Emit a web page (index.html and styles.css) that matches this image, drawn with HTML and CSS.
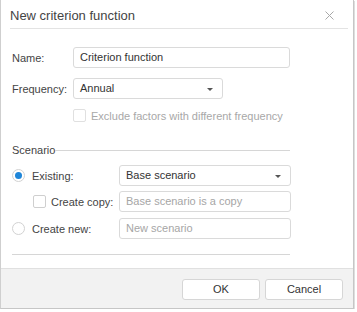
FILE: index.html
```html
<!DOCTYPE html>
<html>
<head>
<meta charset="utf-8">
<link rel="stylesheet" href="styles.css">
</head>
<body>
<div class="dialog">
  <div class="header">
    <span class="title">New criterion function</span>
    <span class="close">
      <svg width="9" height="9" viewBox="0 0 9 9"><path d="M0.5 0.5 L8.5 8.5 M8.5 0.5 L0.5 8.5" stroke="#a8a8a8" stroke-width="1" fill="none"/></svg>
    </span>
  </div>
  <div class="body">
    <div class="row r-name">
      <span class="lbl w61">Name:</span>
      <div class="field wide">Criterion function</div>
    </div>
    <div class="row r-freq">
      <span class="lbl w61">Frequency:</span>
      <div class="field combo narrow">Annual<span class="arrow"></span></div>
    </div>
    <div class="row r-excl">
      <span class="chk disabled"></span>
      <span class="dis">Exclude factors with different frequency</span>
    </div>
    <div class="group">
      <span class="gtitle">Scenario</span>
      <span class="gline"></span>
    </div>
    <div class="row r-exist">
      <span class="radio on"></span>
      <span class="lbl w87">Existing:</span>
      <div class="field combo sc">Base scenario<span class="arrow"></span></div>
    </div>
    <div class="row r-copy">
      <span class="chk"></span>
      <span class="lbl w68">Create copy:</span>
      <div class="field sc ph">Base scenario is a copy</div>
    </div>
    <div class="row r-new">
      <span class="radio"></span>
      <span class="lbl w87">Create new:</span>
      <div class="field sc ph">New scenario</div>
    </div>
    <div class="sep"></div>
  </div>
  <div class="footer">
    <button class="btn">OK</button>
    <button class="btn">Cancel</button>
  </div>
</div>
</body>
</html>
```

FILE: styles.css
```css
html, body {
  margin: 0;
  padding: 0;
  background: #ffffff;
}
body {
  font-family: "Liberation Sans", Arial, sans-serif;
  font-size: 11px;
  color: #333333;
}
.dialog {
  width: 354px;
  height: 309px;
  box-sizing: border-box;
  border: 1px solid #c6c6c6;
  border-top: none;
  border-left: 1px solid #cfcfcf;
  box-shadow: 1px 1px 0 #dedede;
  background: #ffffff;
  display: flex;
  flex-direction: column;
}
.header {
  height: 28px;
  margin: 0 5px 0 9px;
  border-bottom: 1px solid #e3e3e3;
  display: flex;
  align-items: center;
  justify-content: space-between;
}
.title {
  font-size: 13px;
  color: #444444;
  padding-top: 2px;
}
.close {
  display: flex;
  margin-right: 14px;
  margin-top: 2px;
}
.body {
  flex: 1;
  padding: 0 0 0 11px;
}
.row {
  display: flex;
  align-items: center;
}
.lbl {
  color: #444444;
  flex: none;
  white-space: nowrap;
}
.w61 { width: 61px; }
.w87 { width: 87px; }
.w68 { width: 68px; }
.field {
  box-sizing: border-box;
  height: 21px;
  border: 1px solid #dadada;
  border-radius: 3px;
  padding: 0 6px;
  line-height: 19px;
  color: #333333;
  position: relative;
  white-space: nowrap;
}
.wide { width: 217px; }
.narrow { width: 150px; }
.sc { width: 172px; }
.ph { color: #a6a6a6; }
.arrow {
  position: absolute;
  right: 9px;
  top: 9px;
  width: 0;
  height: 0;
  border-left: 3.5px solid transparent;
  border-right: 3.5px solid transparent;
  border-top: 3px solid #555555;
}
.r-name { margin-top: 18px; }
.r-freq { margin-top: 10px; }
.r-excl { margin-top: 10px; padding-left: 61px; }
.chk {
  box-sizing: border-box;
  width: 13px;
  height: 13px;
  border: 1px solid #cfcfcf;
  border-radius: 2px;
  background: #ffffff;
  flex: none;
  margin-right: 5px;
}
.chk.disabled { border-color: #e0e0e0; }
.dis { color: #a8a8a8; }
.group {
  display: flex;
  align-items: center;
  margin-top: 22px;
  width: 278px;
}
.gtitle { color: #444444; }
.gline {
  flex: 1;
  height: 1px;
  background: #d6d6d6;
  margin-top: 1px;
}
.radio {
  box-sizing: border-box;
  width: 13px;
  height: 13px;
  border: 1px solid #d2d2d2;
  border-radius: 50%;
  background: #ffffff;
  flex: none;
  margin-right: 7px;
  position: relative;
}
.radio.on::after {
  content: "";
  position: absolute;
  left: 2px;
  top: 2px;
  width: 7px;
  height: 7px;
  border-radius: 50%;
  background: #1f86d9;
}
.r-exist { margin-top: 9px; }
.r-copy { margin-top: 5px; padding-left: 21px; }
.r-new { margin-top: 6px; }
.sep {
  margin-top: 15px;
  width: 278px;
  height: 1px;
  background: #d6d6d6;
}
.footer {
  height: 40px;
  flex: none;
  background: #f2f2f2;
  border-top: 1px solid #e0e0e0;
  display: flex;
  justify-content: flex-end;
  align-items: center;
  gap: 5px;
  padding-right: 10px;
  padding-top: 1px;
  box-sizing: border-box;
}
.btn {
  width: 78px;
  height: 21px;
  border: 1px solid #d6d6d6;
  border-radius: 3px;
  background: #ffffff;
  font-family: "Liberation Sans", Arial, sans-serif;
  font-size: 11px;
  color: #333333;
  padding: 0;
}
```
